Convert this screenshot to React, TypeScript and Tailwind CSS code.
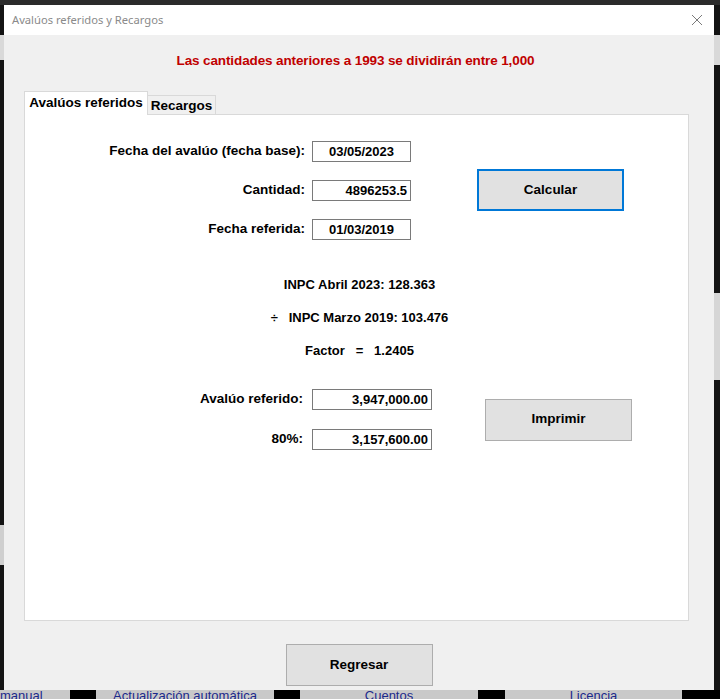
import React from "react";

const font = { fontFamily: '"Liberation Sans", Arial, sans-serif' };

function Field({ value, align = "center", width = "w-[99px]" }: { value: string; align?: "center" | "right"; width?: string }) {
  return (
    <div
      className={`${width} h-[21px] border border-[#7a7a7a] bg-white flex items-center px-[3px] text-[13px] font-bold text-black ${
        align === "right" ? "justify-end" : "justify-center"
      }`}
    >
      {value}
    </div>
  );
}

function WinButton({ label, focused = false }: { label: string; focused?: boolean }) {
  return (
    <button
      className={`w-[147px] h-[42px] bg-[#e1e1e1] text-[13.5px] font-bold text-black flex items-center justify-center ${
        focused ? "border-2 border-[#0078d7]" : "border border-[#adadad]"
      }`}
    >
      {label}
    </button>
  );
}

export default function App() {
  return (
    <div className="relative w-[720px] h-[699px] bg-[#141414] overflow-hidden" style={font}>
      {/* desktop behind the dialog */}
      <div className="absolute top-0 left-0 w-[720px] h-[5px] bg-[#2b2b2b]" />
      <div className="absolute top-[35px] left-0 w-[4px] h-[25px] bg-[#d9d9d9]" />
      <div className="absolute top-[35px] right-0 w-[6px] h-[30px] bg-[#d9d9d9]" />
      <div className="absolute top-[293px] right-0 w-[6px] h-[87px] bg-[#d6d6d6]" />
      <div className="absolute top-[525px] left-0 w-[4px] h-[40px] bg-[#cfcfcf]" />
      <div className="absolute bottom-0 left-0 w-[720px] h-[9px] flex bg-[#c9c9c9] overflow-hidden text-[13px] text-[#1c2a8c] underline">
        <div className="w-[70px] leading-[12px]">manual</div>
        <div className="w-[26px] bg-black" />
        <div className="w-[178px] flex justify-center leading-[12px]">Actualización automática</div>
        <div className="w-[26px] bg-black" />
        <div className="w-[178px] flex justify-center leading-[12px]">Cuentos</div>
        <div className="w-[27px] bg-black" />
        <div className="w-[177px] flex justify-center leading-[12px]">Licencia</div>
        <div className="flex-1 bg-black" />
      </div>

      {/* dialog */}
      <div className="absolute left-[4px] top-[5px] w-[710px] h-[685px] bg-[#f0f0f0] flex flex-col">
        <div className="h-[30px] bg-white flex items-center justify-between pl-[8px] pr-[11px]">
          <span className="text-[11.2px] text-[#8a8a8a]" style={{ fontFamily: '"Noto Sans", "Open Sans", sans-serif' }}>
            Avalúos referidos y Recargos
          </span>
          <svg width="12" height="12" viewBox="0 0 12 12" className="mb-[1px]">
            <path d="M1 1 L11 11 M11 1 L1 11" stroke="#7a7a7a" strokeWidth="1" />
          </svg>
        </div>

        <div className="h-[52px] flex items-center justify-center pt-[1px] pr-[7px]">
          <span className="text-[13.5px] font-bold text-[#c00000] tracking-[-0.12px]">
            Las cantidades anteriores a 1993 se dividirán entre 1,000
          </span>
        </div>

        <div className="px-[20px] mt-[4px]">
          <div className="flex items-end h-[23px] relative z-10">
            <div className="h-[24px] w-[124px] bg-white border border-b-0 border-[#d9d9d9] flex items-center justify-center text-[13.5px] font-bold text-black translate-y-[1px]">
              Avalúos referidos
            </div>
            <div className="h-[19px] w-[68px] bg-[#f0f0f0] border border-l-0 border-b-0 border-[#d9d9d9] flex items-center justify-center text-[13.5px] font-bold text-black pt-[3px]">
              Recargos
            </div>
          </div>

          <div className="h-[507px] w-[665px] bg-white border border-[#d9d9d9] flex flex-col">
            <div className="flex items-center pt-[26px]">
              <div className="grid grid-cols-[280px_99px] gap-x-[7px] gap-y-[18px] items-center">
                <span className="text-right text-[13.5px] font-bold text-black">Fecha del avalúo (fecha base):</span>
                <Field value="03/05/2023" />
                <span className="text-right text-[13.5px] font-bold text-black">Cantidad:</span>
                <Field value="4896253.5" align="right" />
                <span className="text-right text-[13.5px] font-bold text-black">Fecha referida:</span>
                <Field value="01/03/2019" />
              </div>
              <div className="ml-[66px] -mt-[1px]">
                <WinButton label="Calcular" focused />
              </div>
            </div>

            <div className="flex flex-col items-center gap-[17px] mt-[37px] pl-[6px] text-[13px] font-bold text-black leading-[16px]">
              <span>INPC Abril 2023: 128.363</span>
              <span className="whitespace-pre">{"÷   INPC Marzo 2019: 103.476"}</span>
              <span className="whitespace-pre">{"Factor   =   1.2405"}</span>
            </div>

            <div className="flex items-center mt-[30px]">
              <div className="grid grid-cols-[278px_120px] gap-x-[9px] gap-y-[19px] items-center">
                <span className="text-right text-[13.5px] font-bold text-black">Avalúo referido:</span>
                <Field value="3,947,000.00" align="right" width="w-[120px]" />
                <span className="text-right text-[13.5px] font-bold text-black">80%:</span>
                <Field value="3,157,600.00" align="right" width="w-[120px]" />
              </div>
              <div className="ml-[53px]">
                <WinButton label="Imprimir" />
              </div>
            </div>
          </div>
        </div>

        <div className="flex justify-center mt-[23px]">
          <WinButton label="Regresar" />
        </div>
      </div>
    </div>
  );
}
